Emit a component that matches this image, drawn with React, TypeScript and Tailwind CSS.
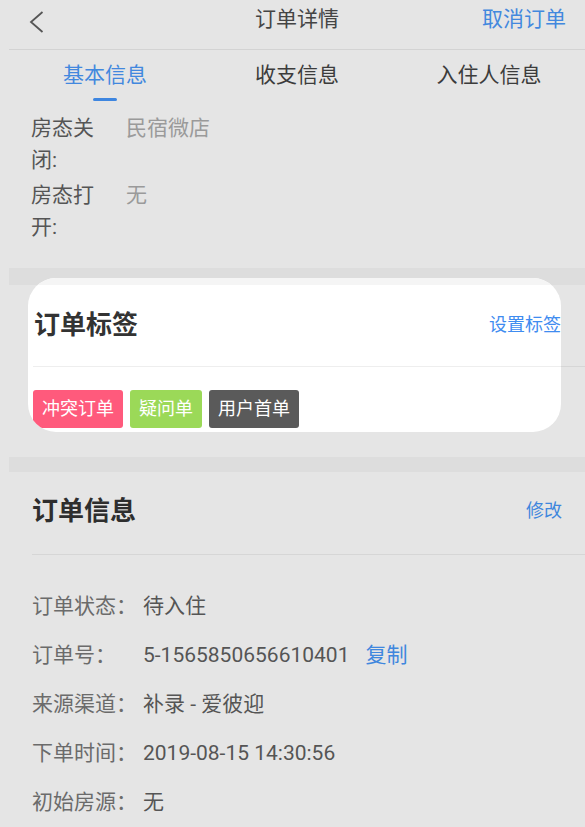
import React from 'react';

const tags = [
    {text: '冲突订单', cls: 'bg-[#ff5a7c]'},
    {text: '疑问单', cls: 'bg-[#9bd958]'},
    {text: '用户首单', cls: 'bg-[#5a5a5a]'},
];

const infoRows = [
    {label: '订单状态：', value: '待入住'},
    {label: '订单号：', value: '5-1565850656610401', copy: true},
    {label: '来源渠道：', value: '补录 - 爱彼迎'},
    {label: '下单时间：', value: '2019-08-15 14:30:56'},
    {label: '初始房源：', value: '无'},
];

const tabs = ['基本信息', '收支信息', '入住人信息'];

export default function App() {
    return (
        <div className="w-[585px] h-[827px] overflow-hidden bg-[#e5e5e5] flex font-['Roboto','Noto_Sans_CJK_SC',sans-serif]">
            <div className="w-[9px] shrink-0"/>
            <div className="flex-1 flex flex-col">

                {/* header */}
                <div className="h-[50px] pb-[9px] border-b border-[#d3d3d3] grid grid-cols-[1fr_auto_1fr] items-center">
                    <div className="pl-[20px] pt-[5px]">
                        <svg width="15" height="22" viewBox="0 0 15 22" fill="none">
                            <polyline points="13.5,1 2,11 13.5,21" stroke="#555" strokeWidth="1.8"/>
                        </svg>
                    </div>
                    <span className="text-[21px] leading-none text-[#444]">订单详情</span>
                    <span className="justify-self-end pr-[19px] text-[21px] leading-none text-[#4288de]">取消订单</span>
                </div>

                {/* tabs */}
                <div className="grid grid-cols-3">
                    {tabs.map((t, i) => (
                        <div key={t} className="flex flex-col items-center pt-[11px]">
                            <span className={`text-[21px] leading-[28px] ${i === 0 ? 'text-[#4288de]' : 'text-[#3c3c3c]'}`}>{t}</span>
                            <div className={`mt-[9px] w-[24px] h-[3px] rounded-full ${i === 0 ? 'bg-[#3e86e0]' : 'bg-transparent'}`}/>
                        </div>
                    ))}
                </div>

                {/* room state */}
                <div className="pl-[22px] mt-[11px] flex flex-col gap-[3px] text-[21px] leading-[32px]">
                    <div className="flex">
                        <span className="w-[70px] text-[#555]">房态关闭:</span>
                        <span className="ml-[25px] text-[#9a9a9a]">民宿微店</span>
                    </div>
                    <div className="flex">
                        <span className="w-[70px] text-[#555]">房态打开:</span>
                        <span className="ml-[25px] text-[#9a9a9a]">无</span>
                    </div>
                </div>

                <div className="mt-[25px] h-[10px] bg-[#dddddd]"/>

                {/* highlighted tag card */}
                <div className="h-[155px] flex bg-[linear-gradient(#dddddd_0_7px,#e5e5e5_7px)]">
                    <div className="w-[19px] shrink-0"/>
                    <div className="w-[533px] shrink-0 rounded-[28px] overflow-hidden bg-white flex flex-col">
                        <div className="h-[7px] bg-[#f5f5f5]"/>
                        <div className="h-[82px] ml-[5px] border-b border-[#eeeeee] flex items-center justify-between">
                            <span className="ml-[1px] text-[26px] leading-none font-bold text-[#333]">订单标签</span>
                            <span className="text-[18px] leading-none text-[#3f8cf0]">设置标签</span>
                        </div>
                        <div className="flex gap-[7px] pl-[5px] pt-[23px]">
                            {tags.map(tag => (
                                <span key={tag.text}
                                      className={`h-[38px] px-[9px] rounded-[3px] flex items-center text-[18px] leading-none text-white ${tag.cls}`}>
                                    {tag.text}
                                </span>
                            ))}
                        </div>
                    </div>
                    <div className="flex-1 bg-[linear-gradient(#dddddd_0_7px,#e5e5e5_7px_88px,#d6d6d6_88px_89px,#e5e5e5_89px)]"/>
                </div>

                <div className="h-[25px]"/>
                <div className="h-[15px] bg-[#dddddd]"/>

                {/* order info */}
                <div className="h-[83px] ml-[23px] pr-[23px] pb-[4px] border-b border-[#d6d6d6] flex items-center justify-between">
                    <span className="text-[26px] leading-none font-bold text-[#2e2e2e]">订单信息</span>
                    <span className="text-[18px] leading-none text-[#3f87dd]">修改</span>
                </div>
                <div className="pt-[27px] pl-[23px] flex flex-col">
                    {infoRows.map(r => (
                        <div key={r.label} className="h-[49px] flex items-center text-[21px] leading-none">
                            <span className="w-[111px] shrink-0 text-[#6b6b6b]">{r.label}</span>
                            <span className="text-[#555]">{r.value}</span>
                            {r.copy && <span className="ml-[16px] text-[#3f87de]">复制</span>}
                        </div>
                    ))}
                </div>

            </div>
        </div>
    );
}
